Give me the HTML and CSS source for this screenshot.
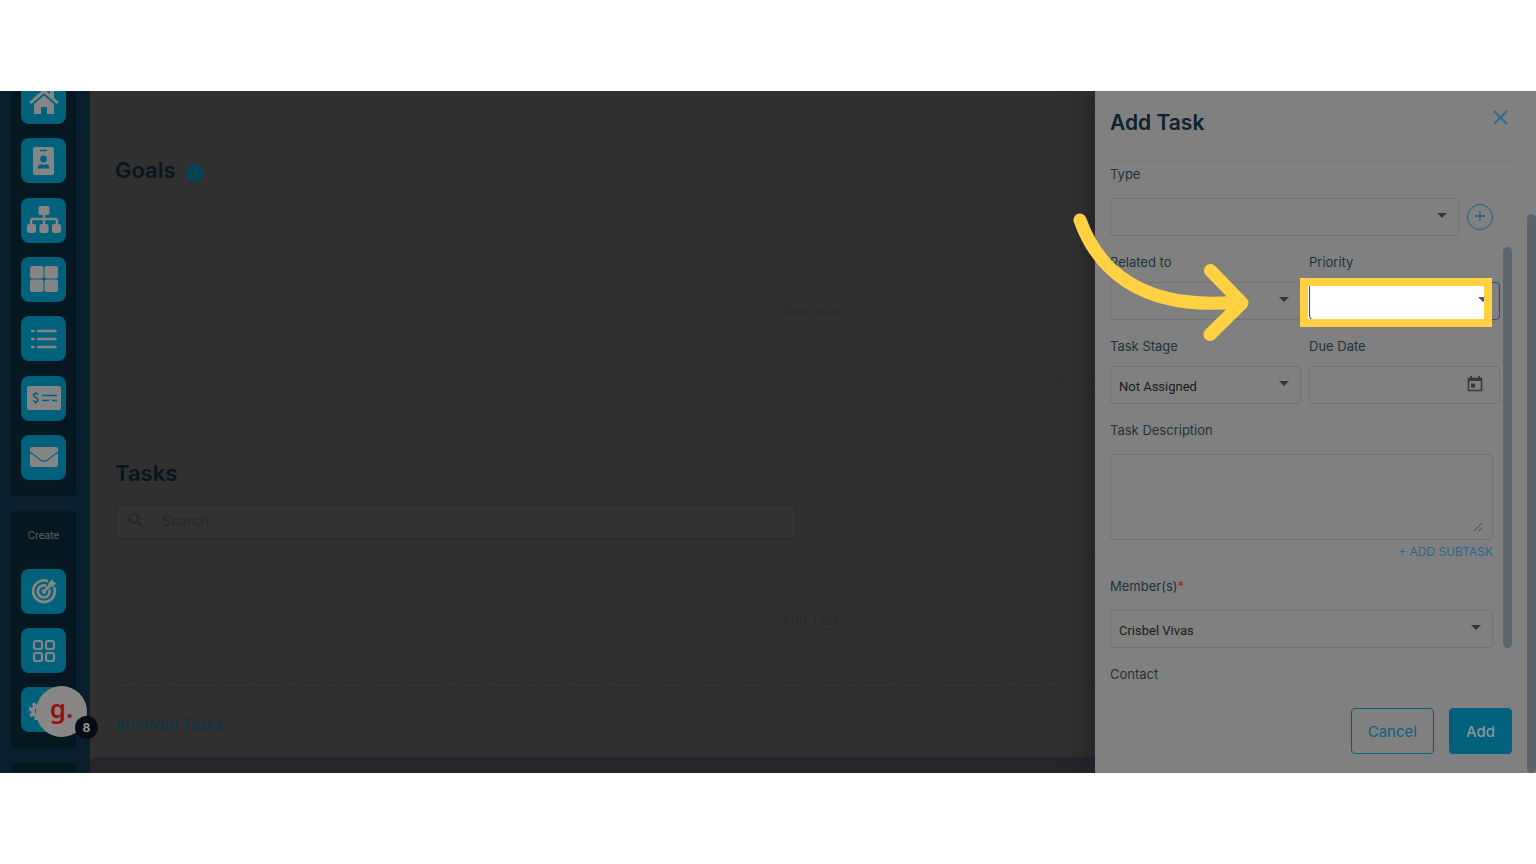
FILE: index.html
```html
<!DOCTYPE html>
<html lang="en">
<head>
<meta charset="UTF-8">
<meta name="viewport" content="width=device-width, initial-scale=1">
<link rel="stylesheet" href="styles.css">
<title>Add Task</title>
</head>
<body>
  <div class="app">
    <nav class="sidebar">
      <div class="menu menu-main">
        <a href="#" class="tile" aria-label="Home">
          <svg width="32" height="32" viewBox="0 0 32 32" fill="currentColor"><path d="M16 3 1 16l2 2.300L16 7.200l13 11.100 2-2.300-5-4.300V3h-4v5.200z"/><path d="M16 9.500 6 18v10h7v-7h6v7h7V18z"/></svg>
        </a>
        <a href="#" class="tile" aria-label="Contacts">
          <svg width="22" height="28" viewBox="0 0 22 28"><rect width="21" height="28" rx="2" fill="currentColor"/><path d="M7 3.500h7" stroke="#00617d" stroke-width="1.500"/><circle cx="10.500" cy="12" r="3.400" fill="#00617d"/><path d="M4.500 21.500c0-5 4-5 6-3.500 2-1.500 6-1.500 6 3.500z" fill="#00617d"/></svg>
        </a>
        <a href="#" class="tile" aria-label="Organization">
          <svg width="36" height="28" viewBox="0 0 36 28" fill="currentColor"><rect x="12.500" width="11" height="9" rx="2"/><rect x="1" y="18" width="9" height="9" rx="2"/><rect x="13.500" y="18" width="9" height="9" rx="2"/><rect x="26" y="18" width="9" height="9" rx="2"/><path d="M5 18v-3q0-2 2-2h22q2 0 2 2v3M18 8v10" fill="none" stroke="currentColor" stroke-width="2.500"/></svg>
        </a>
        <a href="#" class="tile" aria-label="Boards">
          <svg width="28" height="26" viewBox="0 0 28 26" fill="currentColor"><rect width="13.500" height="12.500" rx="2"/><rect x="14.500" width="13.500" height="12.500" rx="2"/><rect y="13.500" width="13.500" height="12.500" rx="2"/><rect x="14.500" y="13.500" width="13.500" height="12.500" rx="2"/></svg>
        </a>
        <a href="#" class="tile" aria-label="List">
          <svg width="28" height="22" viewBox="0 0 28 22" stroke="currentColor" stroke-width="2.500" stroke-linecap="round"><path d="M2 3h1.500M8 3h17.500M2 11h1.500M8 11h17.500M2 19h1.500M8 19h17.500"/></svg>
        </a>
        <a href="#" class="tile" aria-label="Payments">
          <svg width="36" height="26" viewBox="0 0 36 26"><rect x="1" y="1" width="34" height="24" rx="2" fill="currentColor"/><path d="M12 10C11 8 7.500 8 7.500 10.300s4.500 2 4.500 4.400-4 2.600-5 .8M9.700 7v2M9.700 16.500v2M16 10.500h15M16 15.500h7M26 15.500h5" fill="none" stroke="#00617d" stroke-width="1.500"/></svg>
        </a>
        <a href="#" class="tile" aria-label="Mail">
          <svg width="28" height="22" viewBox="0 0 28 22"><rect y="1" width="28" height="20" rx="2" fill="currentColor"/><path d="M0 6l10.500 8q3.500 2.500 7 0L28 6" fill="none" stroke="#00617d" stroke-width="1.300"/></svg>
        </a>
      </div>
      <div class="menu menu-create">
        <span class="menu-title">Create</span>
        <a href="#" class="tile" aria-label="Goal">
          <svg width="28" height="28" viewBox="0 0 28 28" fill="none" stroke="currentColor" stroke-width="2.800"><path d="M18 3.200a10.800 10.800 0 1 0 6 6"/><path d="M16.500 8a6 6 0 1 0 3 3.500M14 13.500l6-6"/><circle cx="14" cy="13.500" r="1" /><path d="M18.500 8.500V5l4-4 1 3 3 1-4 4z" fill="currentColor" stroke="none"/></svg>
        </a>
        <a href="#" class="tile" aria-label="Category">
          <svg width="24" height="24" viewBox="0 0 24 24" fill="none" stroke="currentColor" stroke-width="2.200"><rect x="2" y="2" width="8" height="8" rx="2"/><rect x="14" y="2" width="8" height="8" rx="2"/><rect x="2" y="14" width="8" height="8" rx="2"/><rect x="14" y="14" width="8" height="8" rx="2"/></svg>
        </a>
        <a href="#" class="tile" aria-label="Settings">
          <svg width="32" height="20" viewBox="0 0 32 20" fill="none" stroke="currentColor"><circle cx="10" cy="11" r="5" stroke-width="4"/><circle cx="10" cy="11" r="7.500" stroke-width="3.500" stroke-dasharray="3.400 2.490"/></svg>
        </a>
      </div>
      <div class="menu menu-more"></div>
    </nav>

    <main class="content">
      <div class="heading">
        <h1>Goals</h1>
        <svg class="info" width="18" height="18" viewBox="0 0 18 18"><circle cx="9" cy="9" r="9" fill="#004557"/><path d="M9.500 3.500h2v2h-2zM7.300 7.300h3.400l-1.300 5h1.300v1.500H7l1.300-5h-1z" fill="#2f3a3e"/></svg>
      </div>
      <div class="empty empty-goals">Add Goal</div>
      <hr>
      <div class="heading heading-tasks"><h1>Tasks</h1></div>
      <div class="search">
        <svg width="16" height="16" viewBox="0 0 16 16" fill="none" stroke="#20292c" stroke-width="2"><circle cx="6" cy="5.500" r="4.500"/><path d="M9 8.500 14 13.500"/></svg>
        <input type="text" placeholder="Search..." aria-label="Search tasks">
      </div>
      <div class="empty">Add Task</div>
      <a href="#" class="archived">Archived Tasks</a>
      <div class="bottom-bar"></div>
    </main>

    <div class="recorder">g.<span class="count">8</span></div>

    <aside class="drawer">
      <div class="drawer-top">
        <h2>Add Task</h2>
        <button type="button" class="close" aria-label="Close">
          <svg width="15" height="15" viewBox="0 0 15 15" stroke="currentColor" stroke-width="1.800"><path d="M1 1l13 13M14 1 1 14"/></svg>
        </button>
      </div>
      <form>
        <div class="field wide">
          <label for="type">Type</label>
          <div class="type-row">
            <div class="select"><select id="type"><option></option></select></div>
            <button type="button" class="plus" aria-label="Add type">
              <svg width="10" height="10" viewBox="0 0 10 10" stroke="currentColor" stroke-width="1.300"><path d="M5 0v10M0 5h10"/></svg>
            </button>
          </div>
        </div>
        <div class="pair">
          <div class="field">
            <label for="related">Related to</label>
            <div class="select"><select id="related"><option></option></select></div>
          </div>
          <div class="field">
            <label for="priority">Priority</label>
            <div class="select active"><select id="priority"><option></option></select><span class="ring"></span></div>
          </div>
        </div>
        <div class="pair">
          <div class="field">
            <label for="stage">Task Stage</label>
            <div class="select"><select id="stage"><option>Not Assigned</option></select></div>
          </div>
          <div class="field">
            <label for="due">Due Date</label>
            <div class="date">
              <input type="text" id="due">
              <svg width="16" height="18" viewBox="0 0 16 18"><path d="M1.500 3.500h13v12h-13z" fill="none" stroke="#3a3a3a" stroke-width="1.600"/><path d="M1 3h14v3H1zM3 1h2v3H3zM11 1h2v3h-2zM4 8.500h4v4H4z" fill="#3a3a3a"/></svg>
            </div>
          </div>
        </div>
        <div class="field wide description">
          <label for="description">Task Description</label>
          <div class="area">
            <textarea id="description"></textarea>
            <svg width="10" height="10" viewBox="0 0 10 10" stroke="#444" stroke-width="1"><path d="M1 9l8-8M5.500 9 9 5.500"/></svg>
          </div>
          <a href="#" class="subtask">+ ADD SUBTASK</a>
        </div>
        <div class="field wide">
          <label for="members">Member(s)<span class="required">*</span></label>
          <div class="select"><select id="members"><option>Crisbel Vivas</option></select></div>
        </div>
        <div class="field wide"><span class="label">Contact</span></div>
        <div class="actions">
          <button type="button" class="cancel">Cancel</button>
          <button type="submit" class="add">Add</button>
        </div>
      </form>
      <span class="scroll scroll-form"></span>
      <span class="scroll scroll-page"></span>
      <svg class="arrow" width="183" height="130" viewBox="1073 213 183 130" fill="none" stroke="#ffd143" stroke-width="13" stroke-linecap="round" stroke-linejoin="round"><path d="M1080 220C1097 268 1140 311 1236 302M1210.500 270.500 1242 303l-32 31.500"/></svg>
    </aside>
  </div>
</body>
</html>
```
FILE: styles.css
```css
* {
  box-sizing: border-box;
}
body {
  margin: 0;
  min-height: 100vh;
  display: flex;
  align-items: center;
  background-color: #fff;
  font-family: Inter, "Open Sans", sans-serif;
}
a {
  text-decoration: none;
}
h1, h2 {
  margin: 0;
  font-weight: 600;
}
input, select, textarea, button {
  font-family: inherit;
  margin: 0;
}
svg {
  display: block;
}
.app {
  position: relative;
  display: flex;
  width: 100%;
  overflow: hidden;
  background-color: #303030;
}

/* sidebar */
.sidebar {
  width: 90px;
  flex-shrink: 0;
  display: flex;
  flex-direction: column;
  gap: 15px;
  padding: 0 14px 0 11px;
  background-color: #0a1f2e;
}
.menu {
  display: flex;
  flex-direction: column;
  align-items: center;
  background-color: #05171f;
  border-radius: 3px;
}
.menu-main {
  height: 417px;
  margin-top: -12px;
  padding-bottom: 16px;
  justify-content: space-between;
}
.menu-create {
  gap: 14px;
  padding: 14px 0 16px;
}
.menu-title {
  margin-bottom: 10px;
  font-size: 10px;
  line-height: 20px;
  color: #58666c;
}
.menu-more {
  flex: 1;
}
.tile {
  width: 45px;
  height: 45px;
  display: flex;
  align-items: center;
  justify-content: center;
  border-radius: 8px;
  background-color: #00617d;
  color: #858585;
}

/* goals and tasks */
.content {
  flex: 1;
  padding: 64px 29px 0 25px;
}
.heading {
  display: flex;
  align-items: center;
  gap: 10px;
}
.heading h1 {
  font-size: 22px;
  line-height: 30px;
  color: #07161e;
}
.info {
  margin-top: 5px;
}
.empty {
  height: 134px;
  margin-top: 15px;
  padding-bottom: 3px;
  display: flex;
  align-items: center;
  justify-content: center;
  border: 1px dashed #272b2d;
  border-radius: 4px;
  font-size: 13px;
  font-weight: 500;
  color: #272c2f;
}
.empty-goals {
  margin-top: 60px;
}
.content hr {
  margin: 14px 0 0;
  border: 0;
  border-top: 1px dashed #2b2d2f;
}
.heading-tasks {
  margin-top: 64px;
}
.search {
  width: 50%;
  max-width: 682px;
  height: 35px;
  margin-top: 16px;
  padding: 0 12px 2px;
  display: flex;
  align-items: center;
  gap: 18px;
  border: 1px solid #2a2b2c;
  border-radius: 4px;
  background-color: #323232;
}
.search input {
  flex: 1;
  padding: 0;
  border: 0;
  outline: 0;
  background: none;
  font-size: 14px;
}
.search input::placeholder {
  color: #232829;
}
.archived {
  display: block;
  margin-top: 25px;
  font-size: 15px;
  line-height: 24px;
  color: #073646;
}
.bottom-bar {
  height: 16px;
  margin: 20px -29px 0 -25px;
  border-radius: 6px 0 0 0;
  background-color: #25262c;
}
.recorder {
  position: absolute;
  left: 36px;
  bottom: 36px;
  width: 51px;
  height: 51px;
  border-radius: 50%;
  background-color: #8b8686;
  color: #950f12;
  font-family: "Noto Sans", sans-serif;
  font-size: 26px;
  font-weight: 600;
  line-height: 44px;
  text-align: center;
}
.count {
  position: absolute;
  right: -11px;
  bottom: -2px;
  width: 23px;
  height: 23px;
  border-radius: 50%;
  background-color: #080a16;
  color: #989898;
  font-family: Inter, sans-serif;
  font-size: 12px;
  font-weight: 700;
  line-height: 23px;
}

/* add task drawer */
.drawer {
  position: absolute;
  top: 0;
  right: 0;
  bottom: 0;
  width: 441px;
  padding: 0 24px 0 15px;
  background-color: #808080;
  box-shadow: -6px 0 22px rgba(20, 22, 28, 0.5);
}
.drawer-top {
  height: 71px;
  padding: 17px 4px 0 0;
  display: flex;
  align-items: flex-start;
  justify-content: space-between;
  border-bottom: 1px solid #747b7f;
}
.drawer-top h2 {
  font-size: 21px;
  line-height: 30px;
  color: #0c222d;
}
.close {
  padding: 2px 0;
  border: 0;
  background: none;
  color: #2c698c;
}
form {
  padding-top: 2px;
}
.field {
  flex: 1;
  margin-bottom: 16px;
}
.wide {
  margin-right: 19px;
}
.field label, .label {
  display: block;
  margin-bottom: 10px;
  font-size: 13px;
  line-height: 20px;
  color: #1c333d;
}
.wide label {
  margin-bottom: 14px;
}
.pair {
  display: flex;
  gap: 8px;
  margin-right: 12px;
}
.type-row {
  display: flex;
  align-items: center;
  gap: 8px;
}
.select {
  position: relative;
  flex: 1;
  isolation: isolate;
}
.select select, .date input {
  display: block;
  width: 100%;
  height: 38px;
  padding: 2px 30px 0 8px;
  appearance: none;
  border: 1px solid #727272;
  border-radius: 4px;
  outline: 0;
  background: none;
  color: #1b1b1b;
  font-family: Roboto, sans-serif;
  font-size: 13px;
}
.select::after {
  content: "";
  position: absolute;
  top: 15px;
  right: 12px;
  border: 5px solid transparent;
  border-top-color: #363636;
  border-bottom: 0;
}
.active select {
  border-color: #463c80;
}
.active::after {
  border-top-color: #4c4fb0;
}
.active::before, .ring {
  content: "";
  position: absolute;
  top: -4px;
  left: -9px;
  right: 8px;
  height: 49px;
}
.active::before {
  z-index: -1;
  background-color: #fff;
}
.ring {
  z-index: 1;
  border: 8px solid #ffd143;
}
.plus {
  width: 26px;
  height: 26px;
  padding: 0 0 2px;
  display: flex;
  align-items: center;
  justify-content: center;
  border: 1px solid #116883;
  border-radius: 50%;
  background: none;
  color: #175f80;
}
.date, .area {
  position: relative;
}
.date svg {
  position: absolute;
  top: 9px;
  right: 17px;
}
.area textarea {
  display: block;
  width: 100%;
  height: 86px;
  resize: none;
  border: 1px solid #727272;
  border-radius: 4px;
  outline: 0;
  background: none;
}
.area svg {
  position: absolute;
  right: 10px;
  bottom: 8px;
}
.description {
  margin-bottom: 14px;
}
.subtask {
  display: block;
  margin-top: 2px;
  font-size: 12px;
  line-height: 20px;
  text-align: right;
  color: #2a6688;
}
.required {
  color: #951f25;
}
.label {
  margin-bottom: 24px;
}
.wide:has(.label) {
  margin-bottom: 0;
}
.actions {
  display: flex;
  justify-content: flex-end;
  gap: 15px;
}
.actions button {
  height: 46px;
  padding: 0 16px;
  border: 1px solid #00617d;
  border-radius: 4px;
  font-size: 15px;
}
.actions .cancel {
  background: none;
  color: #086381;
}
.actions .add {
  background-color: #00617d;
  color: #8d9699;
  font-weight: 500;
}
.scroll {
  position: absolute;
  width: 9px;
  border-radius: 5px;
  background-color: #5b676c;
}
.scroll-form {
  top: 156px;
  right: 24px;
  height: 401px;
}
.scroll-page {
  top: 123px;
  right: 0;
  bottom: 0;
  background-color: #59636b;
}
.arrow {
  position: absolute;
  z-index: 2;
  top: 122px;
  left: -22px;
}
```
